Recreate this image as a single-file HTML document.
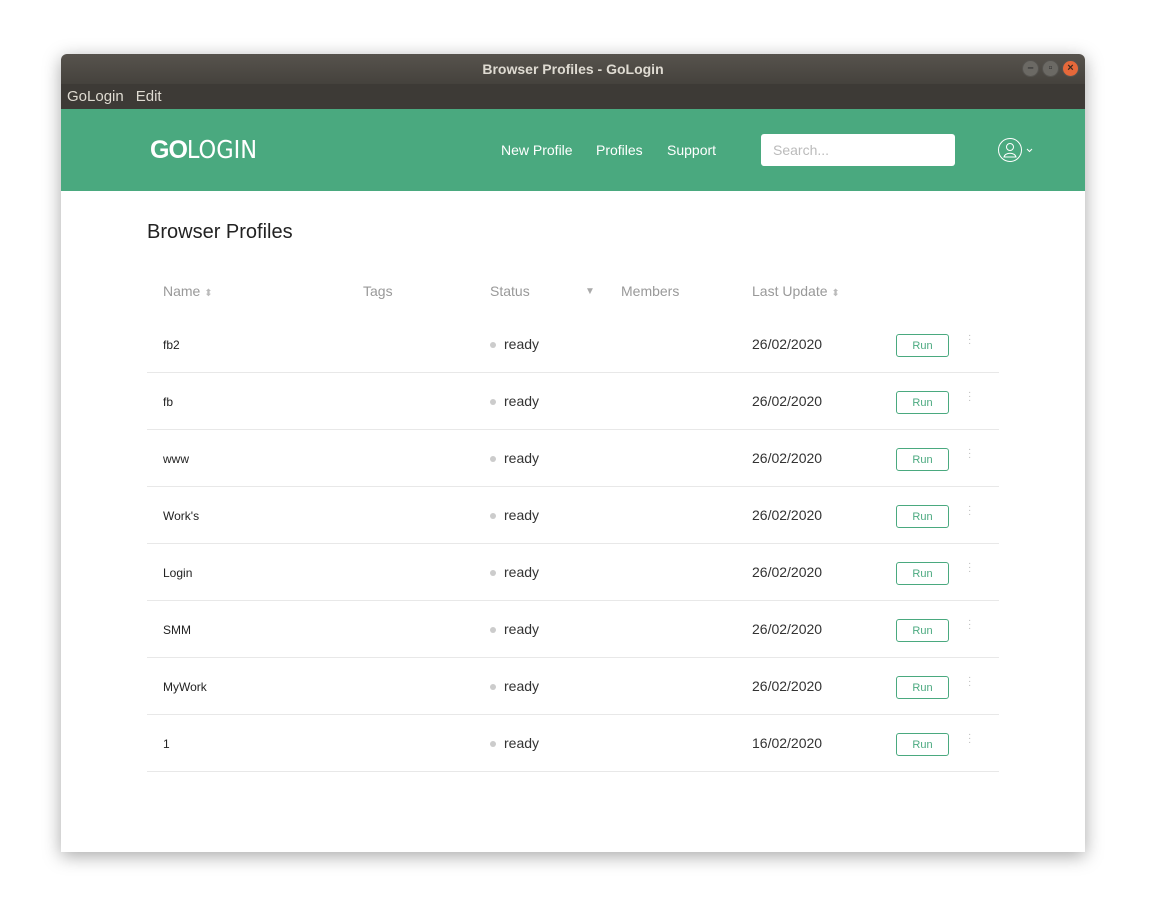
<!DOCTYPE html>
<html><head><meta charset="utf-8"><style>
*{margin:0;padding:0;box-sizing:border-box}
body{width:1149px;height:909px;background:#fff;font-family:"Liberation Sans",sans-serif;position:relative;overflow:hidden}
.win{position:absolute;left:61px;top:54px;width:1024px;height:798px;background:#fff;box-shadow:0 4px 18px rgba(0,0,0,.35);border-radius:6px 6px 0 0;overflow:hidden}
.title{height:30px;background:linear-gradient(#57534d,#45423d);color:#dfdbd2;font-weight:bold;font-size:14px;text-align:center;line-height:30px}
.menu{height:25px;background:#3d3a36;color:#dfdbd2;font-size:15px;line-height:25px;padding-left:6px}
.menu span{margin-right:12px}
.btns{position:absolute;right:6px;top:6px;display:flex;gap:3px}
.btns div{width:17px;height:17px;border-radius:50%;background:#6b6964;border:1px solid #55534f;color:#333;font-size:11px;text-align:center;line-height:15px}
.btns .x{background:#e5683a;color:#3a2a20}
.hdr{height:82px;background:#4aa97f;position:relative;color:#fff}
.logo{position:absolute;left:89px;top:26px;font-size:25px;font-family:"DejaVu Sans Condensed",sans-serif}
.logo b{font-family:"Liberation Sans",sans-serif;font-weight:bold;letter-spacing:-1px}
.nav{position:absolute;top:33px;font-size:14px}
.search{position:absolute;left:700px;top:25px;width:194px;height:32px;background:#fff;border-radius:3px;color:#bbb;font-size:14px;line-height:32px;padding-left:12px}
h1{position:absolute;left:86px;top:167px;font-size:20px;font-weight:normal;color:#222}
.th{position:absolute;top:229px;font-size:14px;color:#999}
.row{position:absolute;left:86px;width:852px;height:57px;border-bottom:1px solid #e8e8e8;font-size:14px;color:#333}
.row span{position:absolute;top:20px}
.row span.n{font-size:12px;top:22px;color:#222}
.dot{position:absolute;left:343px;top:26px;width:6px;height:6px;border-radius:50%;background:#ccc}
.run{position:absolute;left:749px;top:18px;width:53px;height:23px;border:1px solid #4aa97f;border-radius:3px;color:#4aa97f;font-size:11px;text-align:center;line-height:23px}
.more{position:absolute;left:821px;top:18px;width:2px;color:#bbb;font-size:10px;line-height:4px}
</style></head><body>
<div class="win">
<div class="title">Browser Profiles - GoLogin
<div class="btns"><div>–</div><div>▫</div><div class="x">×</div></div></div>
<div class="menu"><span>GoLogin</span><span>Edit</span></div>
<div class="hdr">
<div class="logo"><b>GO</b>LOGIN</div>
<div class="nav" style="left:440px">New Profile</div>
<div class="nav" style="left:535px">Profiles</div>
<div class="nav" style="left:606px">Support</div>
<div class="search">Search...</div>
<svg style="position:absolute;left:937px;top:28px" width="40" height="26" viewBox="0 0 40 26"><circle cx="12" cy="13" r="11.5" fill="none" stroke="#fff" stroke-width="1"/><circle cx="12" cy="10" r="3.5" fill="none" stroke="#fff"/><path d="M6 20c1-5 11-5 12 0z" fill="none" stroke="#fff"/><path d="M29 12l2.5 2.5 2.5-2.5" fill="none" stroke="#fff"/></svg>
</div>
<h1>Browser Profiles</h1>
<div class="th" style="left:102px">Name <span style="color:#bbb;font-size:10px">⬍</span></div>
<div class="th" style="left:302px">Tags</div>
<div class="th" style="left:429px">Status</div>
<div class="th" style="left:524px;color:#aaa;font-size:10px;top:232px">▼</div>
<div class="th" style="left:560px">Members</div>
<div class="th" style="left:691px">Last Update <span style="color:#bbb;font-size:10px">⬍</span></div>
<div class="row" style="top:262px"><span class="n" style="left:16px">fb2</span><i class="dot"></i><span style="left:357px">ready</span><span style="left:605px">26/02/2020</span><div class="run">Run</div><div class="more">·<br>·<br>·</div></div>
<div class="row" style="top:319px"><span class="n" style="left:16px">fb</span><i class="dot"></i><span style="left:357px">ready</span><span style="left:605px">26/02/2020</span><div class="run">Run</div><div class="more">·<br>·<br>·</div></div>
<div class="row" style="top:376px"><span class="n" style="left:16px">www</span><i class="dot"></i><span style="left:357px">ready</span><span style="left:605px">26/02/2020</span><div class="run">Run</div><div class="more">·<br>·<br>·</div></div>
<div class="row" style="top:433px"><span class="n" style="left:16px">Work's</span><i class="dot"></i><span style="left:357px">ready</span><span style="left:605px">26/02/2020</span><div class="run">Run</div><div class="more">·<br>·<br>·</div></div>
<div class="row" style="top:490px"><span class="n" style="left:16px">Login</span><i class="dot"></i><span style="left:357px">ready</span><span style="left:605px">26/02/2020</span><div class="run">Run</div><div class="more">·<br>·<br>·</div></div>
<div class="row" style="top:547px"><span class="n" style="left:16px">SMM</span><i class="dot"></i><span style="left:357px">ready</span><span style="left:605px">26/02/2020</span><div class="run">Run</div><div class="more">·<br>·<br>·</div></div>
<div class="row" style="top:604px"><span class="n" style="left:16px">MyWork</span><i class="dot"></i><span style="left:357px">ready</span><span style="left:605px">26/02/2020</span><div class="run">Run</div><div class="more">·<br>·<br>·</div></div>
<div class="row" style="top:661px"><span class="n" style="left:16px">1</span><i class="dot"></i><span style="left:357px">ready</span><span style="left:605px">16/02/2020</span><div class="run">Run</div><div class="more">·<br>·<br>·</div></div>
</div>
</body></html>
